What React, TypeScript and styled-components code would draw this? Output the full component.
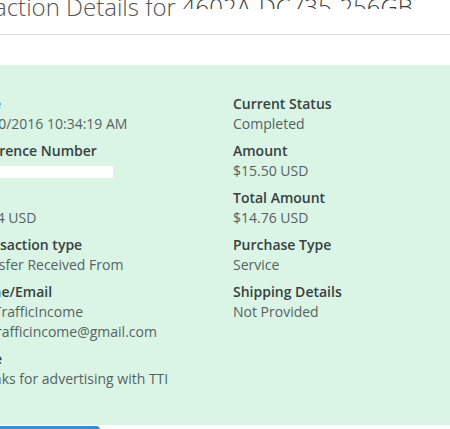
import React from "react";
import styled, { createGlobalStyle } from "styled-components";

const Global = createGlobalStyle`
  html, body { margin: 0; padding: 0; background: #fff; overflow: hidden; }
  body { font-family: "Open Sans", "Liberation Sans", sans-serif; }
`;

const Page = styled.div`
  width: 540px;
  margin-left: -46px;
`;

const Header = styled.div`
  border-bottom: 1px solid #dddddd;
  margin-top: -9px;
  padding-bottom: 11px;
  margin-right: -90px;
`;

const Title = styled.h1`
  margin: 0 0 0 -20px;
  font-family: "Open Sans", sans-serif;
  font-weight: 300;
  font-size: 24px;
  line-height: 32px;
  color: #555555;
  white-space: nowrap;
`;

const Masked = styled.span`
  position: relative;
  display: inline-block;
  vertical-align: top;
  line-height: 32px;
  margin-left: 6px;
  color: #3a3a3a;
`;

const Mask = styled.span`
  position: absolute;
  left: -4px;
  right: -10px;
  top: 18px;
  height: 24px;
  background: #fff;
`;

const Panel = styled.div`
  margin-top: 30px;
  background: #daf5e6;
  padding: 29px 15px 29px 15px;
  display: grid;
  grid-template-columns: 264px 264px;
`;

const Column = styled.dl`
  margin: 0;
`;

const Item = styled.div`
  margin-bottom: 7px;
`;

const Label = styled.dt`
  font-size: 14px;
  line-height: 20px;
  font-weight: 600;
  color: #364141;
`;

const Value = styled.dd`
  margin: 0;
  font-size: 14px;
  line-height: 20px;
  color: #566262;
`;

const Redacted = styled.span`
  display: inline-block;
  vertical-align: middle;
  width: 144px;
  height: 12px;
  background: #ffffff;
`;

const Actions = styled.div`
  padding-top: 1px;
`;

const Button = styled.button`
  width: 146px;
  height: 34px;
  border: none;
  border-radius: 4px;
  background: #3a8ad4;
  color: #fff;
  font-family: "Open Sans", sans-serif;
  font-size: 14px;
`;

type Row = { label: string; values: React.ReactNode[] };

const left: Row[] = [
  { label: "Date", values: ["10/30/2016 10:34:19 AM"] },
  { label: "Reference Number", values: [<Redacted key="r" />] },
  { label: "Fee", values: ["$0.74 USD"] },
  { label: "Transaction type", values: ["Transfer Received From"] },
  { label: "Name/Email", values: ["TopTrafficIncome", "toptrafficincome@gmail.com"] },
  { label: "Note", values: ["Thanks for advertising with TTI"] },
];

const right: Row[] = [
  { label: "Current Status", values: ["Completed"] },
  { label: "Amount", values: ["$15.50 USD"] },
  { label: "Total Amount", values: ["$14.76 USD"] },
  { label: "Purchase Type", values: ["Service"] },
  { label: "Shipping Details", values: ["Not Provided"] },
];

const renderRows = (rows: Row[]) =>
  rows.map((r) => (
    <Item key={r.label}>
      <Label>{r.label}</Label>
      {r.values.map((v, i) => (
        <Value key={i}>{v}</Value>
      ))}
    </Item>
  ));

export default function App() {
  return (
    <>
      <Global />
      <Page>
        <Header>
          <Title>
            Transaction Details for
            <Masked>
              4602A-DC735-256GB
              <Mask />
            </Masked>
          </Title>
        </Header>
        <Panel>
          <Column>{renderRows(left)}</Column>
          <Column>{renderRows(right)}</Column>
        </Panel>
        <Actions>
          <Button>Back</Button>
        </Actions>
      </Page>
    </>
  );
}
